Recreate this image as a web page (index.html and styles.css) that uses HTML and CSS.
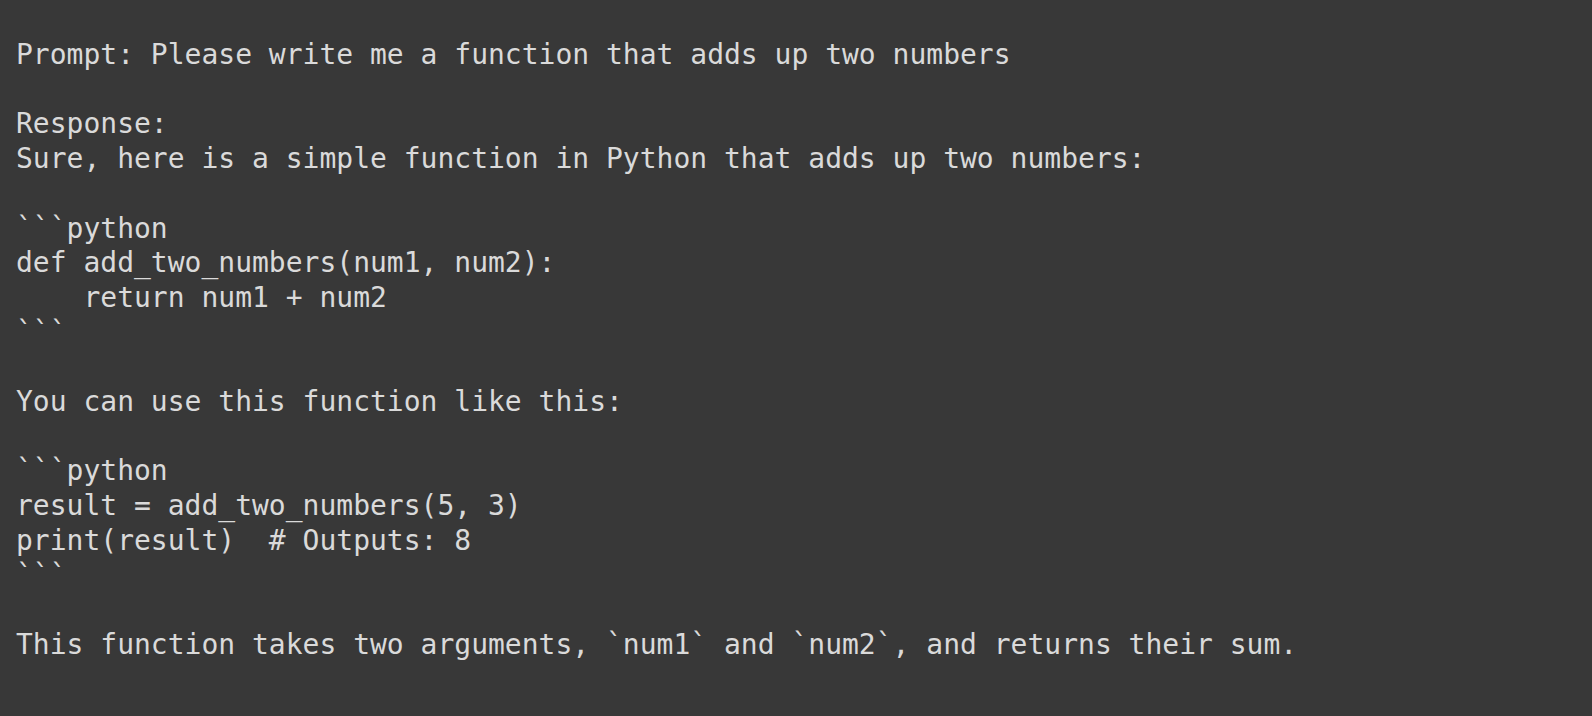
FILE: index.html
```html
<!DOCTYPE html>
<html lang="en">
<head>
<meta charset="utf-8">
<title>Response</title>
<link rel="stylesheet" href="styles.css">
</head>
<body>
<main class="page">
<pre class="output">Prompt: Please write me a function that adds up two numbers

Response:
Sure, here is a simple function in Python that adds up two numbers:

&#96;&#96;&#96;python
def add_two_numbers(num1, num2):
    return num1 + num2
&#96;&#96;&#96;

You can use this function like this:

&#96;&#96;&#96;python
result = add_two_numbers(5, 3)
print(result)  # Outputs: 8
&#96;&#96;&#96;

This function takes two arguments, &#96;num1&#96; and &#96;num2&#96;, and returns their sum.</pre>
</main>
</body>
</html>
```

FILE: styles.css
```css
html, body {
  margin: 0;
  padding: 0;
  background: #383838;
  height: 100%;
}
.page {
  padding: 38px 0 0 16px;
}
.output {
  margin: 0;
  font-family: "DejaVu Sans Mono", monospace;
  font-size: 28px;
  line-height: 34.7px;
  color: #dadada;
  white-space: pre;
}
```
